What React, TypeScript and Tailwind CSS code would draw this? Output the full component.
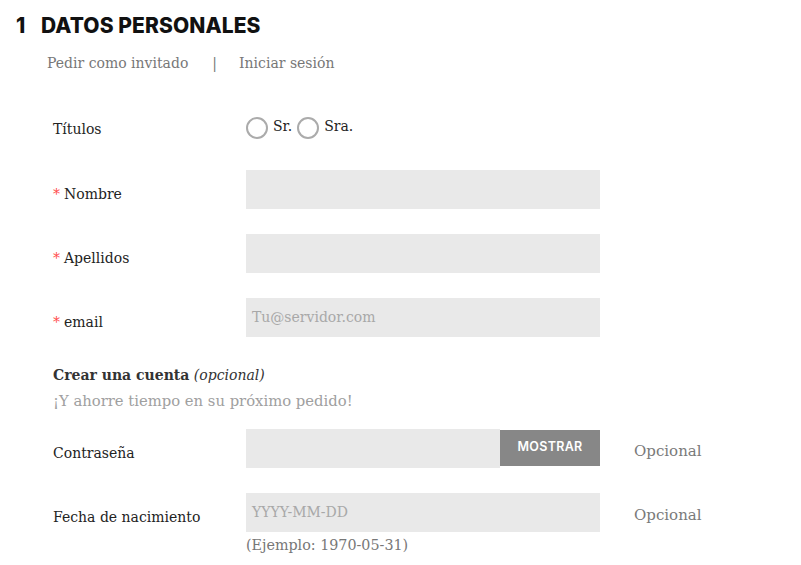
import React from "react";

const serif = { fontFamily: '"DejaVu Serif", "Liberation Serif", serif' };

function Star() {
  return <span className="text-[#ff4c4c] mr-[4px]">*</span>;
}

function Radio({ label }: { label: string }) {
  return (
    <label className="flex items-center">
      <span className="w-[22px] h-[22px] rounded-full border-2 border-[#ababab] bg-white inline-block" />
      <span className="ml-[5px] -mt-[4px]">{label}</span>
    </label>
  );
}

function Row({ label, required, children, extra }: { label: string; required?: boolean; children?: React.ReactNode; extra?: string }) {
  return (
    <div className="flex items-center h-[40px]">
      <div className="w-[246px] shrink-0 pl-[53px] pt-[10px] text-[#232323] whitespace-nowrap">
        {required && <Star />}
        {label}
      </div>
      <div className="w-[354px] shrink-0">{children}</div>
      {extra && <div className="ml-[34px] pt-[6px] text-[#7a7a7a] text-[15px]">{extra}</div>}
    </div>
  );
}

function Input({ placeholder }: { placeholder?: string }) {
  return (
    <div className="h-[39px] bg-[#e9e9e9] flex items-center px-[6px] text-[#a8a8a8] text-[14px]">
      {placeholder}
    </div>
  );
}

export default function App() {
  return (
    <div className="w-[801px] h-[565px] bg-white overflow-hidden text-[14px]" style={serif}>
      <div className="h-[48px] pt-[4px] flex items-center pl-[16px] text-[#111] font-extrabold text-[21px] tracking-[0.1px]" style={{ fontFamily: 'Inter, "Open Sans", sans-serif' }}>
        <span className="w-[25px]">1</span>
        <span>DATOS PERSONALES</span>
      </div>
      <div className="h-[30px] pt-[1px] flex items-center pl-[47px] text-[#777] text-[14px]">
        <span>Pedir como invitado</span>
        <span className="ml-[24px]">|</span>
        <span className="ml-[22px]">Iniciar sesión</span>
      </div>
      <div className="mt-[30px] flex items-center h-[40px] text-[#232323]">
        <div className="w-[246px] shrink-0 pl-[53px] pt-[2px]">Títulos</div>
        <div className="flex items-center gap-[5px]">
          <Radio label="Sr." />
          <Radio label="Sra." />
        </div>
      </div>
      <div className="mt-[21px] flex flex-col gap-[24px]">
        <Row label="Nombre" required>
          <Input />
        </Row>
        <Row label="Apellidos" required>
          <Input />
        </Row>
        <Row label="email" required>
          <Input placeholder="Tu@servidor.com" />
        </Row>
      </div>
      <div className="mt-[25px] pl-[53px] leading-[26px]">
        <div className="text-[#333]">
          <span className="font-bold">Crear una cuenta</span> <i>(opcional)</i>
        </div>
        <div className="text-[#a0a0a0] text-[14.8px]">¡Y ahorre tiempo en su próximo pedido!</div>
      </div>
      <div className="mt-[14px] flex flex-col gap-[24px]">
        <Row label="Contraseña" extra="Opcional">
          <div className="flex h-[39px]">
            <div className="flex-1 bg-[#e9e9e9]" />
            <div
              className="w-[100px] h-[36px] mt-[1px] bg-[#878787] text-white text-[12.5px] font-semibold flex items-center justify-center tracking-[0.3px]"
              style={{ fontFamily: 'Inter, "Open Sans", sans-serif' }}
            >
              MOSTRAR
            </div>
          </div>
        </Row>
        <Row label="Fecha de nacimiento" extra="Opcional">
          <Input placeholder="YYYY-MM-DD" />
        </Row>
      </div>
      <div className="pl-[246px] leading-[26px] text-[#777] text-[14.3px]">(Ejemplo: 1970-05-31)</div>
    </div>
  );
}
